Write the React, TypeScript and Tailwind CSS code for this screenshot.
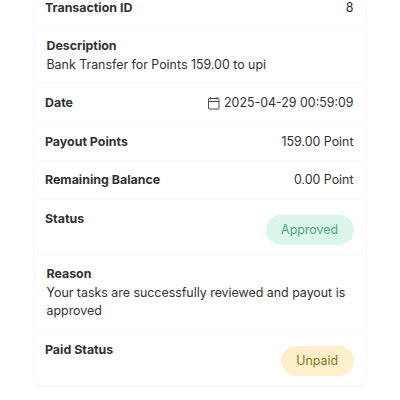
import React from 'react';

interface RowProps {
  label: string;
  className?: string;
  children: React.ReactNode;
}

const Row: React.FC<RowProps> = ({ label, className = 'h-[38px]', children }) => {
  return (
    <div className={`flex justify-between border-b border-[#f7f7f8] pl-2.5 pr-[11.5px] pt-[9px] ${className}`}>
      <span className="font-bold">{label}</span>
      {children}
    </div>
  );
};

const TextRow: React.FC<RowProps> = ({ label, className = '', children }) => {
  return (
    <div className={`border-b border-[#f7f7f8] pl-[11.5px] pr-2 pt-[9px] ${className}`}>
      <div className="font-bold">{label}</div>
      <p className="mt-px leading-[18px]">{children}</p>
    </div>
  );
};

const CalendarIcon = () => (
  <svg width="12" height="13" viewBox="0 0 12 13" fill="none" stroke="#4a4c4f" className="mt-[4px]">
    <path d="M1 1.5h9.5a.5.5 0 0 1 .5.5v9.5a.5.5 0 0 1-.5.5H1a.5.5 0 0 1-.5-.5V2A.5.5 0 0 1 1 1.5ZM.5 4.5H11M2.5 0v2.5M9 0v2.5" />
  </svg>
);

export default function App() {
  return (
    <main className="h-[400px] overflow-hidden bg-white px-[34px] font-['Inter',sans-serif] text-[12.4px] leading-[19px] text-[#303236]">
      <section className="w-[332px] rounded-b-lg border border-t-0 border-[#f7f7f8] shadow-[0_1px_1px_#f8f8f8]">
        <Row label="Transaction ID" className="-mt-[11px] h-[38px]">
          <span>8</span>
        </Row>
        <TextRow label="Description" className="h-[57px]">
          Bank Transfer for Points 159.00 to upi
        </TextRow>
        <Row label="Date" className="h-[39px]">
          <span className="flex gap-1">
            <CalendarIcon />
            2025-04-29 00:59:09
          </span>
        </Row>
        <Row label="Payout Points">
          <span>159.00 Point</span>
        </Row>
        <Row label="Remaining Balance" className="h-[39px]">
          <span>0.00 Point</span>
        </Row>
        <Row label="Status" className="h-[55px]">
          <span className="mt-[5.5px] h-[30.5px] rounded-full bg-[#daf7ea] px-[15.5px] leading-[30px] text-[#4fa781]">Approved</span>
        </Row>
        <TextRow label="Reason" className="h-[76px]">
          Your tasks are successfully reviewed and payout is approved
        </TextRow>
        <Row label="Paid Status" className="h-[54px] border-b-0">
          <span className="mt-[5.5px] h-[30.5px] rounded-full bg-[#fdf0cb] px-[15.5px] leading-[30px] text-[#8a7423]">Unpaid</span>
        </Row>
      </section>
    </main>
  );
}
